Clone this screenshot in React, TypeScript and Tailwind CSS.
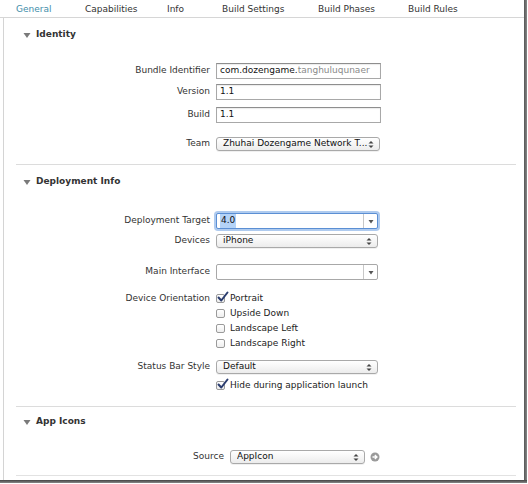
import React from "react";

const font = { fontFamily: '"DejaVu Sans", "Open Sans", sans-serif' };

function Tri() {
  return (
    <svg width="8" height="7" viewBox="0 0 8 7" className="mr-[5px]">
      <path d="M0.5 1 L7.5 1 L4 6 Z" fill="#7a7a7a" />
    </svg>
  );
}

function UpDown() {
  return (
    <svg width="6" height="9" viewBox="0 0 6 9" className="shrink-0">
      <path d="M0.5 3.5 L3 1 L5.5 3.5 Z" fill="#444" />
      <path d="M0.5 5.5 L3 8 L5.5 5.5 Z" fill="#444" />
    </svg>
  );
}

function Header({ title }: { title: string }) {
  return (
    <div className="flex items-center h-[16px] pl-[19px] text-[9px] font-bold text-[#333]">
      <Tri />
      <span>{title}</span>
    </div>
  );
}

function Label({ children }: { children: React.ReactNode }) {
  return <div className="w-[212px] pr-[6px] text-right text-[9px] text-[#333] shrink-0 whitespace-nowrap">{children}</div>;
}

function TextBox({ children }: { children: React.ReactNode }) {
  return (
    <div className="w-[165px] h-[16px] border border-[#a8a8a8] border-t-[#8e8e8e] bg-white flex items-center px-[3px] text-[9px] text-[#111] whitespace-nowrap overflow-hidden shadow-[inset_0_1px_1px_rgba(0,0,0,0.08)]">
      {children}
    </div>
  );
}

function Popup({ children, w = "w-[164px]" }: { children: React.ReactNode; w?: string }) {
  return (
    <div className={`${w} h-[14px] rounded-[3px] border border-[#a9a9a9] bg-gradient-to-b from-white to-[#ececec] flex items-center pl-[6px] pr-[5px] text-[9px] text-[#111] shadow-[0_1px_0_rgba(0,0,0,0.06)]`}>
      <span className="flex-1 whitespace-nowrap overflow-hidden">{children}</span>
      <UpDown />
    </div>
  );
}

function Combo({ children, focus }: { children?: React.ReactNode; focus?: boolean }) {
  return (
    <div
      className={`w-[162px] h-[16px] rounded-[2px] bg-white flex items-center text-[9px] text-[#111] ${
        focus
          ? "border border-[#5b8fd4] shadow-[0_0_0_2px_rgba(110,160,225,0.55)]"
          : "border border-[#a8a8a8]"
      }`}
    >
      <div className="flex-1 pl-[3px] flex items-center">{children}</div>
      <div className="w-[14px] h-full border-l border-[#c8c8c8] flex items-center justify-center">
        <svg width="6" height="5" viewBox="0 0 6 5">
          <path d="M0.5 1 L5.5 1 L3 4.5 Z" fill="#555" />
        </svg>
      </div>
    </div>
  );
}

function Check({ checked }: { checked?: boolean }) {
  return (
    <div className="relative w-[9px] h-[9px] rounded-[2px] border border-[#9a9a9a] bg-gradient-to-b from-white to-[#eee] shrink-0 mr-[5px]">
      {checked && (
        <svg width="12" height="12" viewBox="0 0 12 12" className="absolute left-[0px] top-[-4px]">
          <path d="M1.5 6.5 L4.3 9.5 L10.5 1.5" stroke="#2a3c6e" strokeWidth="2" fill="none" strokeLinecap="round" strokeLinejoin="round" />
        </svg>
      )}
    </div>
  );
}

function Row({ label, children, h = "h-[16px]" }: { label?: string; children: React.ReactNode; h?: string }) {
  return (
    <div className={`flex items-center ${h}`}>
      <Label>{label}</Label>
      {children}
    </div>
  );
}

function CheckRow({ label, checked, text }: { label?: string; checked?: boolean; text: string }) {
  return (
    <div className="flex items-center h-[15px]">
      <Label>{label}</Label>
      <Check checked={checked} />
      <span className="text-[9px] text-[#222]">{text}</span>
    </div>
  );
}

export default function App() {
  const tabs = [
    { t: "General", w: "w-[69px]", active: true },
    { t: "Capabilities", w: "w-[82px]" },
    { t: "Info", w: "w-[55px]" },
    { t: "Build Settings", w: "w-[96px]" },
    { t: "Build Phases", w: "w-[90px]" },
    { t: "Build Rules", w: "w-[80px]" },
  ];
  return (
    <div className="w-[528px] h-[484px] bg-white overflow-hidden relative" style={font}>
      <div className="w-[524px] h-[481px] flex flex-col">
        <div className="h-[18px] border-b border-[#d6d6d6] flex items-center text-[9px] shrink-0 pl-[16px] pt-[2px]">
          {tabs.map((x) => (
            <span key={x.t} className={`${x.w} shrink-0 whitespace-nowrap ${x.active ? "text-[#3f8eaa]" : "text-[#333]"}`}>
              {x.t}
            </span>
          ))}
        </div>
        <div className="flex-1 ml-[3px] border-l border-[#d4d4d4] flex flex-col">
          <div className="mt-[9px]"><Header title="Identity" /></div>
          <div className="mt-[20px]">
            <Row label="Bundle Identifier">
              <TextBox>
                <span>com.dozengame.</span>
                <span className="text-[#8a8a8a]">tanghuluqunaer</span>
              </TextBox>
            </Row>
          </div>
          <div className="mt-[5px]">
            <Row label="Version"><TextBox>1.1</TextBox></Row>
          </div>
          <div className="mt-[7px]">
            <Row label="Build"><TextBox>1.1</TextBox></Row>
          </div>
          <div className="mt-[14px]">
            <Row label="Team" h="h-[14px]"><Popup>Zhuhai Dozengame Network T...</Popup></Row>
          </div>
          <div className="mt-[13px] ml-[12px] mr-[8px] h-px bg-[#dcdcdc]" />
          <div className="mt-[9px]"><Header title="Deployment Info" /></div>
          <div className="mt-[23px]">
            <Row label="Deployment Target">
              <Combo focus>
                <span className="bg-[#b4d3f7] px-[1px]">4.0</span>
              </Combo>
            </Row>
          </div>
          <div className="mt-[5px]">
            <Row label="Devices" h="h-[14px]"><Popup w="w-[162px]">iPhone</Popup></Row>
          </div>
          <div className="mt-[16px]">
            <Row label="Main Interface"><Combo /></Row>
          </div>
          <div className="mt-[11px]">
            <CheckRow label="Device Orientation" checked text="Portrait" />
            <CheckRow text="Upside Down" />
            <CheckRow text="Landscape Left" />
            <CheckRow text="Landscape Right" />
          </div>
          <div className="mt-[9px]">
            <Row label="Status Bar Style" h="h-[14px]"><Popup w="w-[162px]">Default</Popup></Row>
          </div>
          <div className="mt-[4px]">
            <CheckRow checked text="Hide during application launch" />
          </div>
          <div className="mt-[13px] ml-[12px] mr-[8px] h-px bg-[#dcdcdc]" />
          <div className="mt-[7px]"><Header title="App Icons" /></div>
          <div className="mt-[20px] flex items-center h-[14px]">
            <div className="w-[226px] pr-[6px] text-right text-[9px] text-[#333] shrink-0">Source</div>
            <Popup w="w-[135px]">AppIcon</Popup>
            <svg width="10" height="10" viewBox="0 0 10 10" className="ml-[5px]">
              <circle cx="5" cy="5" r="4.5" fill="#9a9a9a" />
              <path d="M2.5 5 H6.5 M4.8 3 L7 5 L4.8 7" stroke="white" strokeWidth="1.3" fill="none" />
            </svg>
          </div>
          <div className="mt-[11px] ml-[12px] mr-[8px] h-px bg-[#e2e2e2]" />
        </div>
      </div>
      <div className="absolute right-[1px] top-0 w-[3px] h-[481px] bg-gradient-to-r from-[#555] to-[#888]" />
      <div className="absolute left-0 bottom-[1px] w-[527px] h-[3px] bg-gradient-to-b from-[#444] to-[#888]" />
    </div>
  );
}
